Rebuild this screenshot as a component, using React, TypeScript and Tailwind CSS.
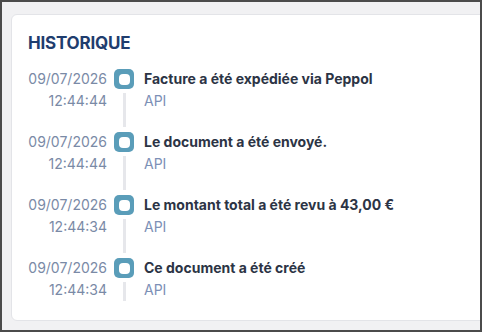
import React from "react";

const items = [
  { date: "09/07/2026", time: "12:44:44", title: "Facture a été expédiée via Peppol" },
  { date: "09/07/2026", time: "12:44:44", title: "Le document a été envoyé." },
  { date: "09/07/2026", time: "12:44:34", title: "Le montant total a été revu à 43,00 €" },
  { date: "09/07/2026", time: "12:44:34", title: "Ce document a été créé" },
];

export default function App() {
  return (
    <div
      className="w-[482px] h-[332px] overflow-hidden bg-[#f1f1f3] border-l-2 border-t-2 border-r-2 border-b-2 border-[#4b4b4b]"
      style={{ fontFamily: "Inter, 'Noto Sans', sans-serif" }}
    >
      <div className="ml-[9px] mt-[12px] w-[500px] h-[307px] bg-white rounded-[6px] border border-[#e3e4e8] pl-[16px] pt-[18px]">
        <div className="text-[17px] font-bold text-[#1f3d6e] leading-[20px] tracking-[-0.2px]">HISTORIQUE</div>
        <div className="mt-[16px] flex flex-col">
          {items.map((it, i) => (
            <div key={i} className="flex h-[63px]">
              <div className="w-[79px] -mt-[1px] flex flex-col items-end text-[14px] leading-[22px] text-[#7a8aa6]">
                <div>{it.date}</div>
                <div>{it.time}</div>
              </div>
              <div className="w-[20px] ml-[7px] flex flex-col items-center">
                <div className="w-[20px] h-[20px] rounded-[5px] bg-[#5a9db9] flex items-center justify-center">
                  <div className="w-[11px] h-[11px] rounded-[4px] bg-white" />
                </div>
                <div
                  className={
                    i === items.length - 1
                      ? "w-[3px] mt-[4px] h-[19px] bg-[#e6e7eb]"
                      : "w-[3px] mt-[4px] h-[34px] bg-[#e6e7eb]"
                  }
                />
              </div>
              <div className="ml-[10px] -mt-[1px] flex flex-col text-[14px] leading-[22px]">
                <div className="font-bold text-[#2c3445]">{it.title}</div>
                <div className="text-[#7c90b6]">API</div>
              </div>
            </div>
          ))}
        </div>
      </div>
    </div>
  );
}
